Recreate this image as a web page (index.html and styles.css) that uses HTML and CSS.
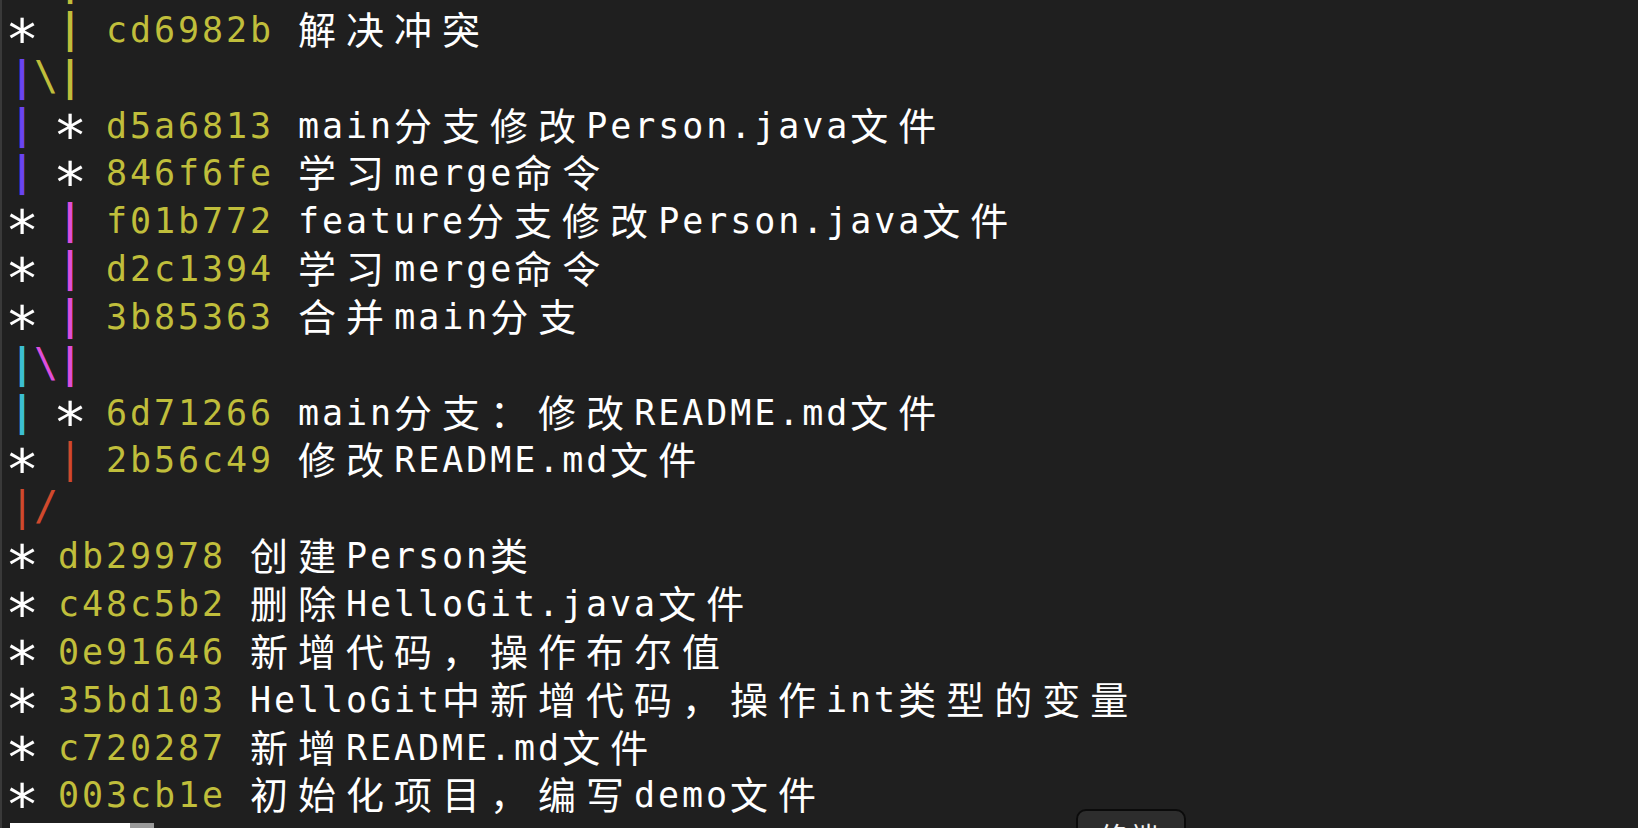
FILE: index.html
```html
<!DOCTYPE html>
<html lang="zh">
<head>
<meta charset="utf-8">
<title>git log --graph</title>
<link rel="stylesheet" href="styles.css">
</head>
<body>
<div class="window">
  <div class="term">
    <div class="ln"><span class="s">*</span> <span class="b y">|</span></div>
    <div class="ln"><span class="s">*</span> <span class="b y">|</span> <span class="h">cd6982b</span> <span class="c">解决冲突</span></div>
    <div class="ln"><span class="b p">|</span><span class="sl y">\</span><span class="b y">|</span></div>
    <div class="ln"><span class="b p">|</span> <span class="s">*</span> <span class="h">d5a6813</span> main<span class="c">分支修改</span>Person.java<span class="c">文件</span></div>
    <div class="ln"><span class="b p">|</span> <span class="s">*</span> <span class="h">846f6fe</span> <span class="c">学习</span>merge<span class="c">命令</span></div>
    <div class="ln"><span class="s">*</span> <span class="b m">|</span> <span class="h">f01b772</span> feature<span class="c">分支修改</span>Person.java<span class="c">文件</span></div>
    <div class="ln"><span class="s">*</span> <span class="b m">|</span> <span class="h">d2c1394</span> <span class="c">学习</span>merge<span class="c">命令</span></div>
    <div class="ln"><span class="s">*</span> <span class="b m">|</span> <span class="h">3b85363</span> <span class="c">合并</span>main<span class="c">分支</span></div>
    <div class="ln"><span class="b cy">|</span><span class="sl m">\</span><span class="b m">|</span></div>
    <div class="ln"><span class="b cy">|</span> <span class="s">*</span> <span class="h">6d71266</span> main<span class="c">分支：修改</span>README.md<span class="c">文件</span></div>
    <div class="ln"><span class="s">*</span> <span class="b thin r">|</span> <span class="h">2b56c49</span> <span class="c">修改</span>README.md<span class="c">文件</span></div>
    <div class="ln"><span class="b thin r">|</span><span class="sl r">/</span></div>
    <div class="ln"><span class="s">*</span> <span class="h">db29978</span> <span class="c">创建</span>Person<span class="c">类</span></div>
    <div class="ln"><span class="s">*</span> <span class="h">c48c5b2</span> <span class="c">删除</span>HelloGit.java<span class="c">文件</span></div>
    <div class="ln"><span class="s">*</span> <span class="h">0e91646</span> <span class="c">新增代码，操作布尔值</span></div>
    <div class="ln"><span class="s">*</span> <span class="h">35bd103</span> HelloGit<span class="c">中新增代码，操作</span>int<span class="c">类型的变量</span></div>
    <div class="ln"><span class="s">*</span> <span class="h">c720287</span> <span class="c">新增</span>README.md<span class="c">文件</span></div>
    <div class="ln"><span class="s">*</span> <span class="h">003cb1e</span> <span class="c">初始化项目，编写</span>demo<span class="c">文件</span></div>
    <div class="ln"><span class="end">(END)</span><span class="cursor"> </span></div>
  </div>
  <div class="popup">终端</div>
</div>
</body>
</html>
```
FILE: styles.css
```css
html, body {
  margin: 0;
  padding: 0;
  background: #1f1f1f;
  overflow: hidden;
}

.window {
  position: relative;
  height: 828px;
  box-sizing: border-box;
  border-left: 2px solid #393939;
  padding-left: 8px;
  overflow: hidden;
  background: #1f1f1f;
}

.term {
  margin-top: -41px;
  display: flex;
  flex-direction: column;
}

.ln {
  height: 47.85px;
  line-height: 47.85px;
  white-space: pre;
  font-family: "DejaVu Sans Mono", "Liberation Mono", monospace;
  font-size: 35px;
  letter-spacing: 2.93px;
  color: #ffffff;
}

.h { color: #c0be3b; }
.y { color: #c0be3b; }
.p { color: #6b44f1; }
.m { color: #de4edc; }
.cy { color: #3cbfd2; }
.r { color: #d0492d; }

.b {
  font-size: 40px;
  font-weight: bold;
  letter-spacing: -0.08px;
  line-height: 0;
}

.b.thin { font-weight: normal; }

.sl {
  font-size: 40px;
  letter-spacing: -0.08px;
  line-height: 0;
}

.s {
  font-size: 56px;
  margin-left: -4.8px;
  letter-spacing: -4.9px;
  vertical-align: -17px;
  line-height: 0;
}

.c {
  font-family: "Noto Sans CJK SC", sans-serif;
  font-size: 38px;
  letter-spacing: 10px;
  line-height: 0;
  vertical-align: -2px;
}

.end {
  background: #ffffff;
  color: #000000;
}

.cursor {
  background: #9a9a9a;
}

.popup {
  position: absolute;
  left: 1074px;
  top: 809px;
  width: 110px;
  height: 44px;
  box-sizing: border-box;
  border: 2px solid #0b0b0b;
  border-radius: 10px;
  background: #2d2d2d;
  color: #f2f2f2;
  font-family: "Noto Sans CJK SC", sans-serif;
  font-size: 28px;
  line-height: 28px;
  padding: 11px 0 0 22px;
  letter-spacing: 2px;
}
```
